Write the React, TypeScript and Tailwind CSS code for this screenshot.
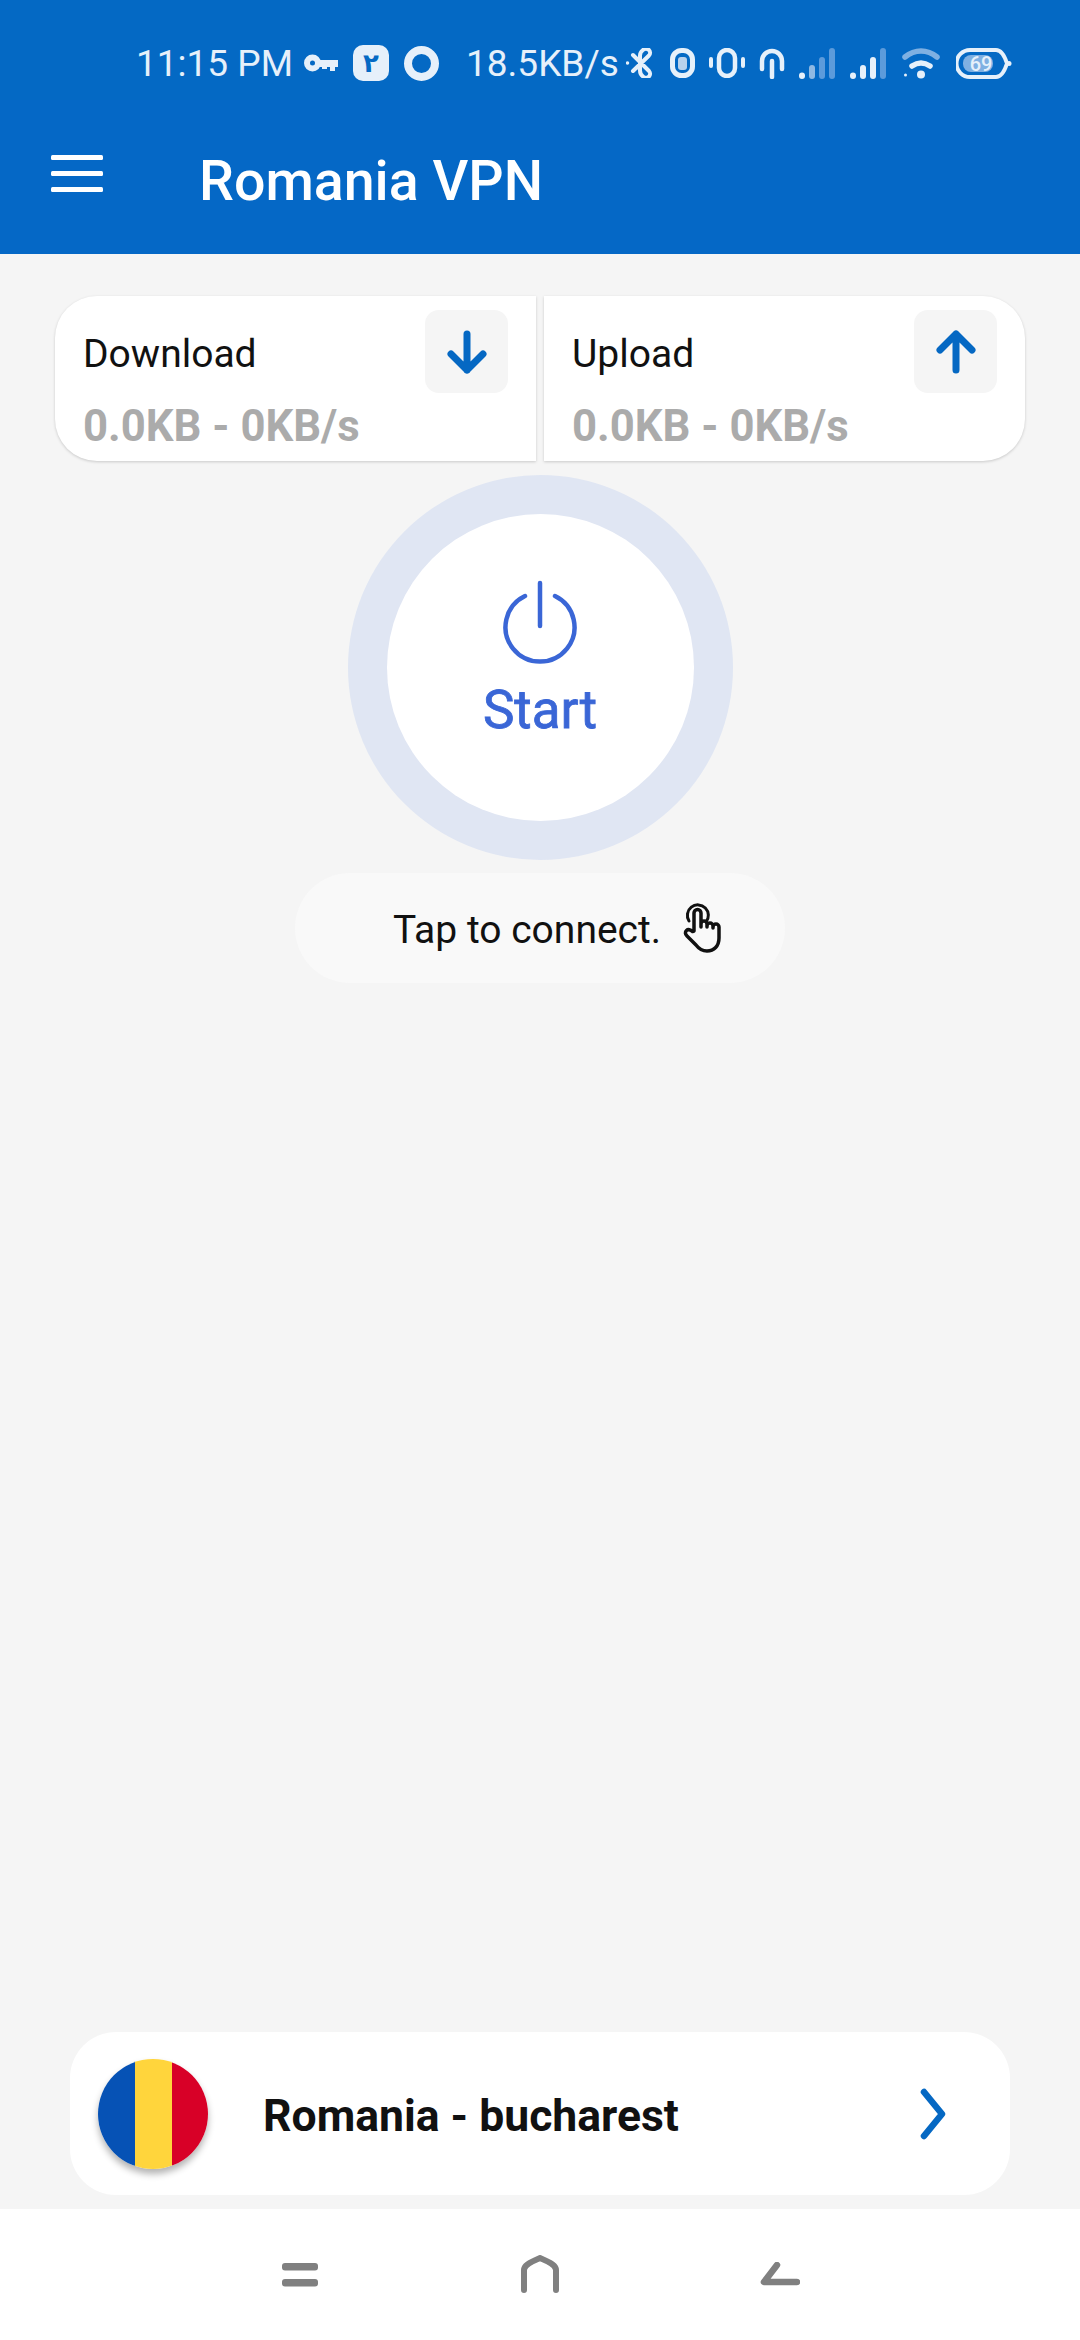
function StatusBar() {
  return (
    <div className="h-[100px] bg-[#0469c4] flex items-center pl-[136px] pt-[26px] text-[#e6f0fa] text-[37px] leading-none">
      <span className="w-[158px] whitespace-nowrap">11:15 PM</span>
      {/* key */}
      <svg className="ml-[10px]" width="34" height="20" viewBox="0 0 34 20" fill="none">
        <circle cx="8.500" cy="10" r="5.500" stroke="#e6f0fa" strokeWidth="6" />
        <path d="M14 7h20v7h-3v4h-5v-4h-3v2h-5v-2h-4z" fill="#e6f0fa" />
      </svg>
      {/* app badge */}
      <div className="ml-[15px] w-[36px] h-[36px] rounded-[10px] bg-[#e6f0fa] flex items-center justify-center text-[#0469c4] text-[26px] font-bold leading-none font-['DejaVu_Sans',sans-serif]">
        ۲
      </div>
      <div className="ml-[15px] w-[35px] h-[35px] rounded-full border-[8px] border-[#e6f0fa]" />
      <span className="ml-[27px] w-[152px] whitespace-nowrap">18.5KB/s</span>
      {/* bluetooth with dot */}
      <svg className="ml-[8px]" width="30" height="30" viewBox="0 0 30 30" fill="none" stroke="#e6f0fa" strokeWidth="4" strokeLinecap="round">
        <path d="M7 7l16 16a4 4 0 0 1-6 5.500c-2-1.500-3-3.500-3-6V7.500c0-2.500 1-4 3-5.500a4 4 0 0 1 6 5.500L7 23" />
        <circle cx="1.500" cy="15" r="1" fill="#e6f0fa" strokeWidth="1.500" />
      </svg>
      <svg className="ml-[14px]" width="25" height="30" viewBox="0 0 25 30" fill="none">
        <rect x="2.500" y="2.500" width="20" height="25" rx="9" stroke="#e6f0fa" strokeWidth="5" />
        <rect x="8" y="9" width="9" height="13" rx="3" fill="#b9d2ec" />
      </svg>
      <svg className="ml-[14px]" width="36" height="30" viewBox="0 0 36 30" fill="none" stroke="#e6f0fa" strokeLinecap="round">
        <rect x="10" y="2" width="16" height="26" rx="8" strokeWidth="4.500" />
        <path d="M2 11v7M34 11v7" strokeWidth="4" />
      </svg>
      <svg className="ml-[14px]" width="26" height="31" viewBox="0 0 26 31" fill="none" stroke="#e6f0fa" strokeLinecap="round" strokeWidth="4.500">
        <path d="M3 21V13a10 10 0 0 1 20 0v8" />
        <path d="M13 13v16" />
      </svg>
      {/* signal bars */}
      <svg className="ml-[14px]" width="37" height="31" viewBox="0 0 37 31" fill="none" strokeLinecap="round" strokeWidth="6">
        <path d="M3 27.500v.5" stroke="#e6f0fa" />
        <path d="M13 20v8" stroke="#8fb9e3" />
        <path d="M23 12v16" stroke="#5c9bdb" />
        <path d="M33 3v25" stroke="#5c9bdb" />
      </svg>
      <svg className="ml-[14px]" width="37" height="31" viewBox="0 0 37 31" fill="none" strokeLinecap="round" strokeWidth="6">
        <path d="M3 27.500v.5" stroke="#e6f0fa" />
        <path d="M13 20v8" stroke="#e6f0fa" />
        <path d="M23 12v16" stroke="#e6f0fa" />
        <path d="M33 3v25" stroke="#5c9bdb" />
      </svg>
      {/* wifi */}
      <svg className="ml-[15px]" width="38" height="31" viewBox="0 0 38 31" fill="none" strokeLinecap="round" strokeWidth="5.500">
        <path d="M3 9c10-8 22-8 32 0" stroke="#7fb0e2" />
        <path d="M10 18c6-4 12-4 18 0" stroke="#e6f0fa" />
        <circle cx="19" cy="26.500" r="4" fill="#e6f0fa" />
        <circle cx="3.500" cy="27" r="1.500" fill="#e6f0fa" />
      </svg>
      {/* battery */}
      <svg className="ml-[16px]" width="56" height="31" viewBox="0 0 56 31" fill="none">
        <path d="M14 2h26c5 0 8 4 11 13.500c-3 9.500-6 13.500-11 13.500H14a13.500 13.500 0 0 1 0-27z" stroke="#e6f0fa" strokeWidth="4" />
        <circle cx="53" cy="15.500" r="2.500" fill="#e6f0fa" />
        <rect x="7" y="7" width="30" height="17" rx="8" fill="#7fb0e2" />
        <text x="25" y="22.500" textAnchor="middle" fontSize="20" fontWeight="500" fill="#e6f0fa" fontFamily="Roboto, sans-serif">69</text>
      </svg>
    </div>
  );
}

function AppBar() {
  return (
    <header className="h-[154px] bg-[#0568c6] flex items-center text-white">
      <svg className="ml-[51px] mb-[7px]" width="52" height="37" viewBox="0 0 52 37" fill="#ffffff">
        <rect y="0" width="52" height="5" rx="1.500" />
        <rect y="16" width="52" height="5" rx="1.500" />
        <rect y="32" width="52" height="5" rx="1.500" />
      </svg>
      <h1 className="ml-[96px] mt-[9px] text-[55.500px] font-medium leading-none whitespace-nowrap">Romania VPN</h1>
    </header>
  );
}

function TrafficCard({ label, dir, rounded }: { label: string; dir: 'down' | 'up'; rounded: string }) {
  return (
    <div className={`flex-1 h-[165px] bg-white shadow-[0_1px_3px_rgba(0,0,0,0.18)] flex justify-between pl-[28px] pr-[28px] pt-[14px] ${rounded}`}>
      <div className="pt-[21px]">
        <div className="text-[39px] leading-[46px] text-[#111]">{label}</div>
        <div className="mt-[24px] text-[43.700px] leading-[50px] font-bold text-[#ababab] whitespace-nowrap">0.0KB - 0KB/s</div>
      </div>
      <div className="w-[83px] h-[83px] rounded-[14px] bg-[#f5f5f5] flex items-center justify-center">
        <svg width="44" height="44" viewBox="0 0 44 44" fill="none" stroke="#0568c3" strokeWidth="7" strokeLinecap="round" strokeLinejoin="round">
          {dir === 'down' ? <path d="M22 4v36M6 24l16 16 16-16" /> : <path d="M22 40V4M6 20L22 4l16 16" />}
        </svg>
      </div>
    </div>
  );
}

export default function App() {
  return (
    <div className="w-[1080px] h-[2340px] flex flex-col bg-[#f5f5f5] font-['Roboto',sans-serif] overflow-hidden">
      <StatusBar />
      <AppBar />

      <main className="flex-1 flex flex-col items-center pt-[42px]">
        {/* Traffic */}
        <div className="w-[970px] flex gap-[8px]">
          <TrafficCard label="Download" dir="down" rounded="rounded-l-[42px]" />
          <TrafficCard label="Upload" dir="up" rounded="rounded-r-[42px]" />
        </div>

        {/* Start button */}
        <div className="mt-[14px] w-[385px] h-[385px] rounded-full bg-[#e0e6f3] flex items-center justify-center">
          <div className="w-[307px] h-[307px] rounded-full bg-white flex flex-col items-center pt-[66px]">
            <svg width="78" height="86" viewBox="0 0 78 86" fill="none" stroke="#3a66d6" strokeWidth="4.500" strokeLinecap="round">
              <path d="M39 3v43" />
              <path d="M24 16a34.500 34.500 0 1 0 30 0" />
            </svg>
            <div className="mt-[14px] text-[53px] leading-[60px] font-normal [-webkit-text-stroke:0.8px_#3a66d6] text-[#3a66d6]">Start</div>
          </div>
        </div>

        {/* Hint */}
        <div className="mt-[13px] w-[490px] h-[110px] rounded-full bg-[#f9f9f9] flex items-center pl-[98px]">
          <span className="mt-[5px] text-[39px] leading-none text-[#111] whitespace-nowrap">Tap to connect.</span>
          <svg className="ml-[22px] mt-[-2px]" width="40" height="52" viewBox="0 0 40 52" fill="none" stroke="#111" strokeWidth="3.500" strokeLinecap="round" strokeLinejoin="round">
            <path d="M6 20a10.500 10.500 0 1 1 17 1" strokeWidth="3" />
            <path d="M11 30V12a3.500 3.500 0 0 1 7 0v14l0-3a3 3 0 0 1 6 0v3-1a3 3 0 0 1 6 0v2-1a3 3 0 0 1 6 0v11c0 8-5 13-12 13-5 0-8-2-11-6l-9-9c-2-2-2-4-.5-5.500s4-1 6 1z" />
          </svg>
        </div>

        <div className="flex-1" />

        {/* Location */}
        <div className="mb-[14px] w-[940px] h-[163px] rounded-[46px] bg-white flex items-center pl-[28px] pr-[64px]">
          <div className="w-[110px] h-[110px] rounded-full overflow-hidden flex shadow-[0_5px_7px_rgba(0,0,0,0.3)]">
            <div className="w-[37px] bg-[#0652b5]" />
            <div className="w-[37px] bg-[#ffd53c]" />
            <div className="w-[36px] bg-[#d80027]" />
          </div>
          <span className="ml-[55px] mt-[5px] flex-1 text-[44.500px] leading-none font-bold text-[#111] whitespace-nowrap">Romania - bucharest</span>
          <svg width="26" height="52" viewBox="0 0 26 52" fill="none" stroke="#0568c3" strokeWidth="6.500" strokeLinecap="round" strokeLinejoin="round">
            <path d="M4 4l18 22L4 48" />
          </svg>
        </div>
      </main>

      {/* Navigation bar */}
      <nav className="h-[131px] bg-white flex items-start pt-[46px] pl-[282px]">
        <svg className="mt-[8px]" width="36" height="24" viewBox="0 0 36 24" fill="#808080">
          <rect x="0" y="0" width="36" height="7.500" rx="3" />
          <rect x="0" y="16" width="36" height="7.500" rx="3" />
        </svg>
        <svg className="ml-[202px]" width="40" height="38" viewBox="0 0 40 38" fill="none" stroke="#808080" strokeWidth="6" strokeLinecap="round" strokeLinejoin="round">
          <path d="M4 35V15C4 11 8 8 20 3c12 5 16 8 16 12v20" />
        </svg>
        <svg className="ml-[200px] mt-[7px]" width="40" height="24" viewBox="0 0 40 24" fill="none" stroke="#808080" strokeWidth="6.500" strokeLinecap="round" strokeLinejoin="round">
          <path d="M17 3L4 20h33" />
        </svg>
      </nav>
    </div>
  );
}
